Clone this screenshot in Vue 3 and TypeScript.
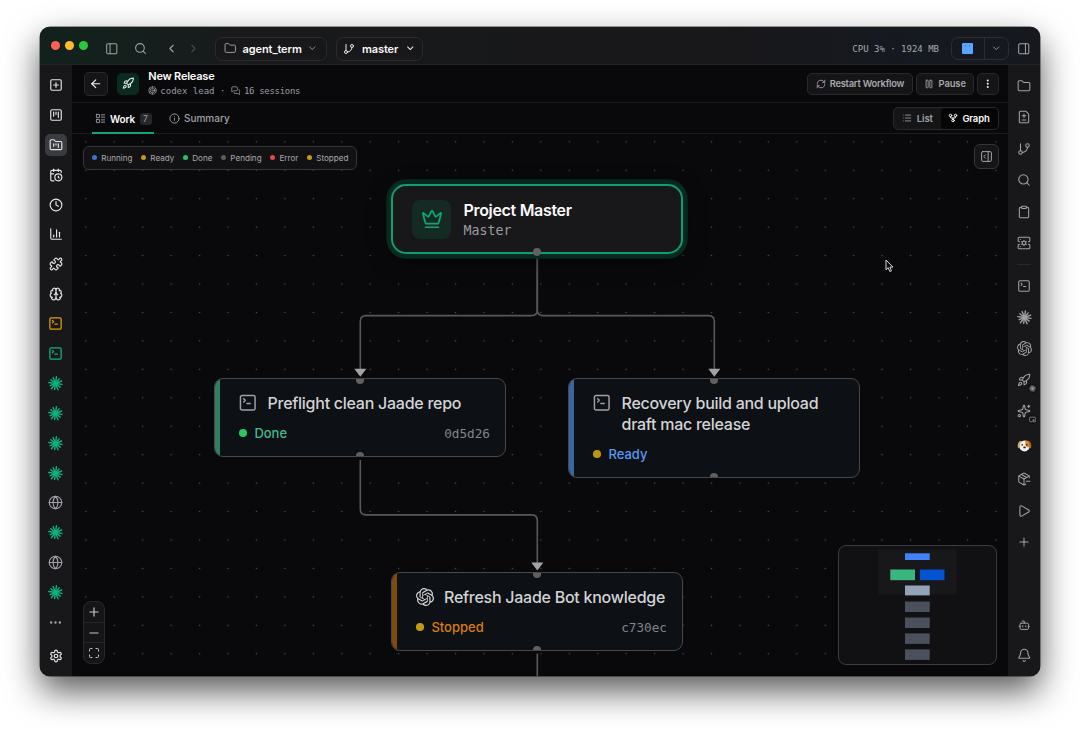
<script setup lang="ts">
import { h, type FunctionalComponent } from 'vue'

const sq = '<rect x="3" y="3" width="18" height="18" rx="2"/>'
const folderPath = '<path d="M20 20a2 2 0 0 0 2-2V8a2 2 0 0 0-2-2h-7.9a2 2 0 0 1-1.69-.9L9.6 3.9A2 2 0 0 0 7.93 3H4a2 2 0 0 0-2 2v13a2 2 0 0 0 2 2Z"/>'

function burst(): string {
  const rays: string[] = []
  const lengths = [10.5, 9.4, 10.8, 9.6, 10.6, 9.2, 10.8, 9.6, 10.2, 10.8, 9.4, 10.6]
  lengths.forEach((len, i) => {
    const a = ((i * 30 + 8) * Math.PI) / 180
    rays.push(`<path d="M12 12L${(12 + len * Math.cos(a)).toFixed(2)} ${(12 + len * Math.sin(a)).toFixed(2)}"/>`)
  })
  return rays.join('')
}

const icons: Record<string, string> = {
  panelLeft: sq + '<path d="M9 3v18"/>',
  panelRight: sq + '<path d="M15 3v18"/>',
  panelOpen: sq + '<path d="M15 3v18"/><path d="m10 15-3-3 3-3"/>',
  search: '<path d="m21 21-4.34-4.34"/><circle cx="11" cy="11" r="8"/>',
  left: '<path d="m15 18-6-6 6-6"/>',
  right: '<path d="m9 18 6-6-6-6"/>',
  down: '<path d="m6 9 6 6 6-6"/>',
  folder: folderPath,
  branch: '<path d="M6 3v12"/><circle cx="18" cy="6" r="3"/><circle cx="6" cy="18" r="3"/><path d="M18 9a9 9 0 0 1-9 9"/>',
  squarePlus: sq + '<path d="M8 12h8"/><path d="M12 8v8"/>',
  kanban: sq + '<path d="M8 7v7"/><path d="M12 7v4"/><path d="M16 7v9"/>',
  folderKanban: folderPath + '<path d="M8 10v4"/><path d="M12 10v2"/><path d="M16 10v6"/>',
  calendar: '<path d="M16 14v2.2l1.6 1"/><path d="M16 2v4"/><path d="M21 7.5V6a2 2 0 0 0-2-2H5a2 2 0 0 0-2 2v14a2 2 0 0 0 2 2h3.5"/><path d="M3 10h5"/><path d="M8 2v4"/><circle cx="16" cy="16" r="6"/>',
  clock: '<circle cx="12" cy="12" r="10"/><path d="M12 6v6l4 2"/>',
  chart: '<path d="M3 3v16a2 2 0 0 0 2 2h16"/><path d="M18 17V9"/><path d="M13 17V5"/><path d="M8 17v-3"/>',
  puzzle: '<path d="M15.39 4.39a1 1 0 0 0 1.68-.474 2.5 2.5 0 1 1 3.014 3.015 1 1 0 0 0-.474 1.68l1.683 1.682a2.414 2.414 0 0 1 0 3.414L19.61 15.39a1 1 0 0 1-1.68-.474 2.5 2.5 0 1 0-3.014 3.015 1 1 0 0 1 .474 1.68l-1.683 1.682a2.414 2.414 0 0 1-3.414 0L8.61 19.61a1 1 0 0 0-1.68.474 2.5 2.5 0 1 1-3.014-3.015 1 1 0 0 0 .474-1.68l-1.683-1.682a2.414 2.414 0 0 1 0-3.414L4.39 8.61a1 1 0 0 1 1.68.474 2.5 2.5 0 1 0 3.014-3.015 1 1 0 0 1-.474-1.68l1.683-1.682a2.414 2.414 0 0 1 3.414 0z"/>',
  brain: '<path d="M12 18V5"/><path d="M15 13a4.17 4.17 0 0 1-3-4 4.17 4.17 0 0 1-3 4"/><path d="M17.598 6.5A3 3 0 1 0 12 5a3 3 0 1 0-5.598 1.5"/><path d="M17.997 5.125a4 4 0 0 1 2.526 5.77"/><path d="M18 18a4 4 0 0 0 2-7.464"/><path d="M19.967 17.483A4 4 0 1 1 12 18a4 4 0 1 1-7.967-.517"/><path d="M6 18a4 4 0 0 1-2-7.464"/><path d="M6.003 5.125a4 4 0 0 0-2.526 5.77"/>',
  terminal: sq + '<path d="m7 11 2-2-2-2"/><path d="M11 13h4"/>',
  burst: burst(),
  globe: '<circle cx="12" cy="12" r="10"/><path d="M12 2a14.5 14.5 0 0 0 0 20 14.5 14.5 0 0 0 0-20"/><path d="M2 12h20"/>',
  dots: '<circle cx="4" cy="12" r="1"/><circle cx="12" cy="12" r="1"/><circle cx="20" cy="12" r="1"/>',
  kebab: '<circle cx="12" cy="5" r="1"/><circle cx="12" cy="12" r="1"/><circle cx="12" cy="19" r="1"/>',
  settings: '<path d="M12.22 2h-.44a2 2 0 0 0-2 2v.18a2 2 0 0 1-1 1.73l-.43.25a2 2 0 0 1-2 0l-.15-.08a2 2 0 0 0-2.73.73l-.22.38a2 2 0 0 0 .73 2.73l.15.1a2 2 0 0 1 1 1.72v.51a2 2 0 0 1-1 1.74l-.15.09a2 2 0 0 0-.73 2.73l.22.38a2 2 0 0 0 2.73.73l.15-.08a2 2 0 0 1 2 0l.43.25a2 2 0 0 1 1 1.73V20a2 2 0 0 0 2 2h.44a2 2 0 0 0 2-2v-.18a2 2 0 0 1 1-1.73l.43-.25a2 2 0 0 1 2 0l.15.08a2 2 0 0 0 2.73-.73l.22-.39a2 2 0 0 0-.73-2.73l-.15-.08a2 2 0 0 1-1-1.74v-.5a2 2 0 0 1 1-1.74l.15-.09a2 2 0 0 0 .73-2.73l-.22-.38a2 2 0 0 0-2.73-.73l-.15.08a2 2 0 0 1-2 0l-.43-.25a2 2 0 0 1-1-1.73V4a2 2 0 0 0-2-2z"/><circle cx="12" cy="12" r="3"/>',
  diff: '<path d="M15 2H6a2 2 0 0 0-2 2v16a2 2 0 0 0 2 2h12a2 2 0 0 0 2-2V7Z"/><path d="M9 10h6"/><path d="M12 13V7"/><path d="M9 17h6"/>',
  clipboard: '<rect x="8" y="2" width="8" height="4" rx="1"/><path d="M16 4h2a2 2 0 0 1 2 2v14a2 2 0 0 1-2 2H6a2 2 0 0 1-2-2V6a2 2 0 0 1 2-2h2"/>',
  server: '<circle cx="12" cy="12" r="3"/><path d="M4.5 10H4a2 2 0 0 1-2-2V4a2 2 0 0 1 2-2h16a2 2 0 0 1 2 2v4a2 2 0 0 1-2 2h-.5"/><path d="M4.5 14H4a2 2 0 0 0-2 2v4a2 2 0 0 0 2 2h16a2 2 0 0 0 2-2v-4a2 2 0 0 0-2-2h-.5"/><path d="M6 6h.01M6 18h.01M12 8V7.4M12 16v.6M8.5 14l-.6.3M15.5 14l.6.3M8.5 10l-.6-.3M15.5 10l.6-.3"/>',
  rocket: '<path d="M4.5 16.5c-1.5 1.26-2 5-2 5s3.74-.5 5-2c.71-.84.7-2.13-.09-2.91a2.18 2.18 0 0 0-2.91-.09z"/><path d="m12 15-3-3a22 22 0 0 1 2-3.95A12.88 12.88 0 0 1 22 2c0 2.72-.78 7.5-6 11a22.35 22.35 0 0 1-4 2z"/><path d="M9 12H4s.55-3.03 2-4c1.62-1.08 5 0 5 0"/><path d="M12 15v5s3.03-.55 4-2c1.08-1.62 0-5 0-5"/>',
  sparkles: '<path d="M11.017 2.814a1 1 0 0 1 1.966 0l1.051 5.558a2 2 0 0 0 1.594 1.594l5.558 1.051a1 1 0 0 1 0 1.966l-5.558 1.051a2 2 0 0 0-1.594 1.594l-1.051 5.558a1 1 0 0 1-1.966 0l-1.051-5.558a2 2 0 0 0-1.594-1.594l-5.558-1.051a1 1 0 0 1 0-1.966l5.558-1.051a2 2 0 0 0 1.594-1.594z"/><path d="M20 2v4"/><path d="M22 4h-4"/><circle cx="4" cy="20" r="2"/>',
  package: '<path d="M16 16h6"/><path d="M21 10V8a2 2 0 0 0-1-1.73l-7-4a2 2 0 0 0-2 0l-7 4A2 2 0 0 0 3 8v8a2 2 0 0 0 1 1.73l7 4a2 2 0 0 0 2 0l2-1.14"/><path d="m7.5 4.27 9 5.15"/><path d="M3.29 7 12 12l8.71-5"/><path d="M12 22V12"/>',
  play: '<path d="M5 5a2 2 0 0 1 3.008-1.728l11.997 6.998a2 2 0 0 1 .003 3.458l-12 7A2 2 0 0 1 5 19z"/>',
  plus: '<path d="M5 12h14"/><path d="M12 5v14"/>',
  minus: '<path d="M5 12h14"/>',
  bot: '<path d="M12 8V4H8"/><rect x="4" y="8" width="16" height="12" rx="2"/><path d="M2 14h2"/><path d="M20 14h2"/><path d="M15 13v2"/><path d="M9 13v2"/>',
  bell: '<path d="M10.268 21a2 2 0 0 0 3.464 0"/><path d="M3.262 15.326A1 1 0 0 0 4 17h16a1 1 0 0 0 .74-1.673C19.41 13.956 18 12.499 18 8A6 6 0 0 0 6 8c0 4.499-1.411 5.956-2.738 7.326"/>',
  crown: '<path d="M11.562 3.266a.5.5 0 0 1 .876 0L15.39 8.87a1 1 0 0 0 1.516.294L21.183 5.5a.5.5 0 0 1 .798.519l-2.834 10.246a1 1 0 0 1-.956.734H5.81a1 1 0 0 1-.957-.734L2.02 6.02a.5.5 0 0 1 .798-.519l4.276 3.664a1 1 0 0 0 1.516-.294z"/><path d="M5 21h14"/>',
  refresh: '<path d="M3 12a9 9 0 0 1 9-9 9.75 9.75 0 0 1 6.74 2.74L21 8"/><path d="M21 3v5h-5"/><path d="M21 12a9 9 0 0 1-9 9 9.75 9.75 0 0 1-6.74-2.74L3 16"/><path d="M8 16H3v5"/>',
  pause: '<rect x="14" y="3" width="5" height="18" rx="1"/><rect x="5" y="3" width="5" height="18" rx="1"/>',
  list: '<path d="M3 5h.01M3 12h.01M3 19h.01M8 5h13M8 12h13M8 19h13"/>',
  fork: '<circle cx="12" cy="18" r="3"/><circle cx="6" cy="6" r="3"/><circle cx="18" cy="6" r="3"/><path d="M18 9v2c0 .6-.4 1-1 1H7c-.6 0-1-.4-1-1V9"/><path d="M12 12v3"/>',
  layout: '<rect x="3" y="3" width="7" height="7" rx="1"/><rect x="3" y="14" width="7" height="7" rx="1"/><path d="M14 4h7M14 9h7M14 15h7M14 20h7"/>',
  info: '<circle cx="12" cy="12" r="10"/><path d="M12 16v-4"/><path d="M12 8h.01"/>',
  messages: '<path d="M16 10a2 2 0 0 1-2 2H6.828a2 2 0 0 0-1.414.586l-2.202 2.202A.71.71 0 0 1 2 14.286V4a2 2 0 0 1 2-2h10a2 2 0 0 1 2 2z"/><path d="M20 9a2 2 0 0 1 2 2v10.286a.71.71 0 0 1-1.212.502l-2.202-2.202A2 2 0 0 0 17.172 19H10a2 2 0 0 1-2-2v-1"/>',
  screen: '<path d="M22 11V7a3 3 0 0 0-3-3H5a3 3 0 0 0-3 3v10a3 3 0 0 0 3 3h5"/><rect x="13" y="14" width="9" height="6" rx="1.5"/>',
  arrowLeft: '<path d="m12 19-7-7 7-7"/><path d="M19 12H5"/>',
  maximize: '<path d="M8 3H5a2 2 0 0 0-2 2v3"/><path d="M21 8V5a2 2 0 0 0-2-2h-3"/><path d="M3 16v3a2 2 0 0 0 2 2h3"/><path d="M16 21h3a2 2 0 0 0 2-2v-3"/>',
  knot: '<path fill="currentColor" stroke="none" d="M22.2819 9.8211a5.9847 5.9847 0 0 0-.5157-4.9108 6.0462 6.0462 0 0 0-6.5098-2.9A6.0651 6.0651 0 0 0 4.9807 4.1818a5.9847 5.9847 0 0 0-3.9977 2.9 6.0462 6.0462 0 0 0 .7427 7.0966 5.98 5.98 0 0 0 .511 4.9107 6.051 6.051 0 0 0 6.5146 2.9001A5.9847 5.9847 0 0 0 13.2599 24a6.0557 6.0557 0 0 0 5.7718-4.2058 5.9894 5.9894 0 0 0 3.9977-2.9001 6.0557 6.0557 0 0 0-.7475-7.0729zm-9.022 12.6081a4.4755 4.4755 0 0 1-2.8764-1.0408l.1419-.0804 4.7783-2.7582a.7948.7948 0 0 0 .3927-.6813v-6.7369l2.02 1.1686a.071.071 0 0 1 .038.052v5.5826a4.504 4.504 0 0 1-4.4945 4.4944zm-9.6607-4.1254a4.4708 4.4708 0 0 1-.5346-3.0137l.142.0852 4.783 2.7582a.7712.7712 0 0 0 .7806 0l5.8428-3.3685v2.3324a.0804.0804 0 0 1-.0332.0615L9.74 19.9502a4.4992 4.4992 0 0 1-6.1408-1.6464zM2.3408 7.8956a4.485 4.485 0 0 1 2.3655-1.9728V11.6a.7664.7664 0 0 0 .3879.6765l5.8144 3.3543-2.0201 1.1685a.0757.0757 0 0 1-.071 0l-4.8303-2.7865A4.504 4.504 0 0 1 2.3408 7.872zm16.5963 3.8558L13.1038 8.364 15.1192 7.2a.0757.0757 0 0 1 .071 0l4.8303 2.7913a4.4944 4.4944 0 0 1-.6765 8.1042v-5.6772a.79.79 0 0 0-.407-.667zm2.0107-3.0231l-.142-.0852-4.7735-2.7818a.7759.7759 0 0 0-.7854 0L9.409 9.2297V6.8974a.0662.0662 0 0 1 .0284-.0615l4.8303-2.7866a4.4992 4.4992 0 0 1 6.6802 4.66zM8.3065 12.863l-2.02-1.1638a.0804.0804 0 0 1-.038-.0567V6.0742a4.4992 4.4992 0 0 1 7.3757-3.4537l-.142.0805L8.704 5.459a.7948.7948 0 0 0-.3927.6813zm1.0976-2.3654l2.602-1.4998 2.6069 1.4998v2.9994l-2.5974 1.4997-2.6067-1.4997Z"/>',
  codex: '<circle cx="12" cy="12" r="10"/><circle cx="12" cy="12" r="6"/><circle cx="12" cy="12" r="2"/><path d="M12 2v4M12 18v4M3.3 7l3.5 2M17.2 15l3.5 2M20.7 7l-3.5 2M6.8 15l-3.5 2"/>',
  dog: '<g stroke="none"><ellipse cx="12" cy="12.600" rx="8.600" ry="8.800" fill="#f4f1ea"/><path fill="#d9902f" d="M13.500 4c4-.6 7 2 7.200 7 0 3.500-2.500 4.500-5 3.500-2.700-1.600-3-6.500-2.200-10.500z"/><path fill="#cfa878" d="M5.500 4.500C2.500 5.500.6 10 1.200 14.500c.8 2.800 2.800 2 3.200-.8.3-3.700.8-6.400 2.800-8.700z"/><path fill="#b4641c" d="M18.500 4.500c3 1 5 5.500 4.300 10-.8 2.800-2.800 2-3.200-.8-.3-3.700-.8-6.400-2.800-8.700z"/><circle cx="8.300" cy="11" r="1.300" fill="#222"/><circle cx="15.700" cy="11" r="1.300" fill="#222"/><ellipse cx="12" cy="15" rx="2" ry="1.500" fill="#222"/></g>',
}

const Icon: FunctionalComponent<{ name: string; size: number; stroke?: number }> = (props) =>
  h('svg', {
    width: props.size,
    height: props.size,
    viewBox: '0 0 24 24',
    fill: 'none',
    stroke: 'currentColor',
    'stroke-width': props.stroke ?? 2,
    'stroke-linecap': 'round',
    'stroke-linejoin': 'round',
    innerHTML: icons[props.name],
  })
Icon.props = ['name', 'size', 'stroke']

interface RailItem { icon: string; tone?: string; active?: boolean; size?: number; stroke?: number; badge?: string }

const agent: RailItem = { icon: 'burst', tone: 'green', size: 15, stroke: 2.3 }
const web: RailItem = { icon: 'globe', tone: 'muted', size: 15, stroke: 1.8 }

const leftRail: RailItem[] = [
  { icon: 'squarePlus' },
  { icon: 'kanban' },
  { icon: 'folderKanban', active: true },
  { icon: 'calendar' },
  { icon: 'clock' },
  { icon: 'chart' },
  { icon: 'puzzle' },
  { icon: 'brain' },
  { icon: 'terminal', tone: 'amber', size: 15 },
  { icon: 'terminal', tone: 'green', size: 15 },
  agent, agent, agent, agent, web, agent, web, agent,
  { icon: 'dots', tone: 'muted', size: 13, stroke: 2.4 },
]

const rightTop: RailItem[] = [
  { icon: 'folder' }, { icon: 'diff' }, { icon: 'branch' }, { icon: 'search' }, { icon: 'clipboard' }, { icon: 'server' },
]
const rightAgents: RailItem[] = [
  { icon: 'terminal' }, { icon: 'burst', size: 15, stroke: 2.2 }, { icon: 'knot', size: 15 },
  { icon: 'rocket', badge: 'burst' }, { icon: 'sparkles', badge: 'screen' },
  { icon: 'dog', size: 15 }, { icon: 'package' }, { icon: 'play' }, { icon: 'plus' },
]

const legend = [
  { label: 'Running', color: '#3b73cf' },
  { label: 'Ready', color: '#c49a16' },
  { label: 'Done', color: '#2bc169' },
  { label: 'Pending', color: '#5c5c61' },
  { label: 'Error', color: '#e2484b' },
  { label: 'Stopped', color: '#c49a16' },
]

const nodes = [
  { x: 142, y: 244, h: 79, icon: 'terminal', title: ['Preflight clean Jaade repo'], status: 'Done', tone: 'done', hash: '0d5d26' },
  { x: 496, y: 244, h: 100, icon: 'terminal', title: ['Recovery build and upload', 'draft mac release'], status: 'Ready', tone: 'ready', hash: '' },
  { x: 319, y: 438, h: 79, icon: 'knot', title: ['Refresh Jaade Bot knowledge'], status: 'Stopped', tone: 'stopped', hash: 'c730ec' },
]

const miniNodes = [
  { x: 905, y: 553.3, h: 6.7, color: '#3f83f6' },
  { x: 890.3, y: 569.5, h: 10.7, color: '#3cb681' },
  { x: 919.8, y: 569.5, h: 10.7, color: '#0353d2' },
  { x: 905, y: 585.5, h: 9.9, color: '#94a3b8' },
  { x: 905, y: 601.5, h: 10.5, color: '#4a505c' },
  { x: 905, y: 617.5, h: 10.5, color: '#4a505c' },
  { x: 905, y: 633.4, h: 10.5, color: '#4a505c' },
  { x: 905, y: 649.4, h: 10.5, color: '#4a505c' },
]
</script>

<template>
  <div class="desktop">
    <div class="window">
      <header class="titlebar">
        <div class="lights"><i class="red" /><i class="yellow" /><i class="lime" /></div>
        <Icon class="tb-panel" name="panelLeft" :size="13.5" :stroke="1.8" />
        <Icon class="tb-search" name="search" :size="13" :stroke="2" />
        <Icon class="tb-back" name="left" :size="13" />
        <Icon class="tb-fwd" name="right" :size="13" />
        <button class="picker project">
          <Icon name="folder" :size="12.5" :stroke="1.8" /><span>agent_term</span><Icon name="down" :size="10.5" />
        </button>
        <button class="picker git">
          <Icon name="branch" :size="12" /><span>master</span><Icon name="down" :size="10.5" :stroke="2.4" />
        </button>
        <span class="usage">CPU 3% · 1924 MB</span>
        <div class="split">
          <span class="split-main"><i class="bot-face"><b /><b /></i></span>
          <span class="split-more"><Icon name="down" :size="10.5" /></span>
        </div>
        <Icon class="tb-right" name="panelRight" :size="13.5" :stroke="1.8" />
      </header>

      <div class="body">
        <nav class="rail left">
          <span v-for="(item, i) in leftRail" :key="i" class="cell" :class="[item.tone, { active: item.active }]">
            <i class="hit"><Icon :name="item.icon" :size="item.size ?? 14" :stroke="item.stroke ?? 2" /></i>
          </span>
          <span class="cell last"><Icon name="settings" :size="14" :stroke="2.1" /></span>
        </nav>

        <main class="main">
          <section class="head">
            <span class="btn back"><Icon name="arrowLeft" :size="13.5" /></span>
            <span class="logo"><Icon name="rocket" :size="12.5" /></span>
            <div class="title">
              <h1>New Release</h1>
              <p>
                <Icon name="codex" :size="9" :stroke="1.8" /><span class="lead">codex lead</span><span class="sep">·</span>
                <Icon name="messages" :size="9.5" /><span class="count">16 sessions</span>
              </p>
            </div>
            <div class="actions">
              <span class="btn restart"><Icon name="refresh" :size="10" /><span>Restart Workflow</span></span>
              <span class="btn pause"><Icon name="pause" :size="10" /><span>Pause</span></span>
              <span class="btn more"><Icon name="kebab" :size="11.5" :stroke="2.2" /></span>
            </div>
          </section>

          <section class="tabs">
            <span class="tab work"><Icon name="layout" :size="11" /><b>Work</b><i>7</i></span>
            <span class="tab summary"><Icon name="info" :size="11" /><b>Summary</b></span>
            <div class="toggle">
              <span><Icon name="list" :size="10" />List</span>
              <span class="on"><Icon name="fork" :size="10" :stroke="2.4" />Graph</span>
            </div>
          </section>

          <section class="canvas">
            <svg class="layer" width="936" height="542" viewBox="72 134 936 542">
              <defs>
                <pattern id="grid" x="71.6" y="127.6" width="28.44" height="28.44" patternUnits="userSpaceOnUse">
                  <circle cx="14.22" cy="14.22" r=".8" fill="#4c4c51" />
                </pattern>
              </defs>
              <rect x="72" y="134" width="936" height="542" fill="url(#grid)" />
              <g fill="none" stroke="#58585a" stroke-width="1.6">
                <path d="M537.3 254V310Q537.3 315.6 531.7 315.6H366Q360.3 315.6 360.3 321.3V370" />
                <path d="M537.3 254V310Q537.3 315.6 542.9 315.6H708.6Q714.3 315.6 714.3 321.3V370" />
                <path d="M360.3 460V509.2Q360.3 514.9 366 514.9H531.6Q537.3 514.9 537.3 520.6V564" />
                <path d="M537.3 653.5V676" />
              </g>
              <g fill="#a3a3a5">
                <path d="M354.3 368.8h12l-6 8z" />
                <path d="M708.3 368.8h12l-6 8z" />
                <path d="M531.3 562.6h12l-6 8z" />
              </g>
            </svg>

            <article class="master">
              <span class="crown"><Icon name="crown" :size="22" :stroke="1.9" /></span>
              <div><h2>Project Master</h2><p>Master</p></div>
              <i class="port" />
            </article>

            <article
              v-for="n in nodes" :key="n.status" class="node" :class="n.tone"
              :style="{ left: n.x + 'px', top: n.y + 'px', height: n.h + 'px' }"
            >
              <i class="port in" /><i class="port out" />
              <div class="node-title">
                <Icon :name="n.icon" :size="n.icon === 'knot' ? 18 : 19.5" :stroke="1.8" />
                <h3><span v-for="line in n.title" :key="line">{{ line }}</span></h3>
              </div>
              <div class="node-foot"><i class="dot" /><b>{{ n.status }}</b><code>{{ n.hash }}</code></div>
            </article>

            <div class="legend">
              <span v-for="l in legend" :key="l.label"><i :style="{ background: l.color }" />{{ l.label }}</span>
            </div>
            <span class="btn collapse"><Icon name="panelOpen" :size="13" :stroke="1.8" /></span>
            <div class="zoom">
              <span><Icon name="plus" :size="14" /></span>
              <span><Icon name="minus" :size="14" /></span>
              <span><Icon name="maximize" :size="12" /></span>
            </div>
            <div class="minimap">
              <svg width="157" height="118" viewBox="839 546 157 118">
                <rect x="878.5" y="549.5" width="78" height="45" fill="#18181a" />
                <rect v-for="(m, i) in miniNodes" :key="i" :x="m.x" :y="m.y" width="24.7" :height="m.h" :fill="m.color" />
              </svg>
            </div>
            <svg class="cursor" width="9" height="14" viewBox="0 0 9 14">
              <path d="M1 1v9.700l2.200-2 1.600 3.800 1.700-.7-1.600-3.700h3z" fill="#0a0a0b" stroke="#d8d8da" stroke-width="1" stroke-linejoin="round" />
            </svg>
          </section>
        </main>

        <nav class="rail right">
          <span v-for="item in rightTop" :key="item.icon" class="cell"><Icon :name="item.icon" :size="14" :stroke="1.8" /></span>
          <hr>
          <span v-for="item in rightAgents" :key="item.icon" class="cell" :class="item.icon">
            <Icon :name="item.icon" :size="item.size ?? 14" :stroke="item.stroke ?? 1.8" />
            <i v-if="item.badge" class="badge"><Icon :name="item.badge" :size="7" :stroke="2.4" /></i>
          </span>
          <span class="cell end"><Icon name="bot" :size="12.5" :stroke="1.9" /></span>
          <span class="cell end-2"><Icon name="bell" :size="14.5" :stroke="1.8" /></span>
        </nav>
      </div>
    </div>
  </div>
</template>

<style>
body { background: #fff; overflow: hidden; }
</style>

<style scoped>
* { box-sizing: border-box; }
svg { display: block; flex: none; }
h1, h2, h3, p { margin: 0; }
i, b { font-style: normal; }
.desktop { width: 1080px; height: 729px; padding: 27px 40px 0; background: #fff; font-family: Inter, "Liberation Sans", sans-serif; }
.window { width: 1000px; height: 649px; border-radius: 10px; overflow: hidden; background: #09090b; color: #fafafa; display: flex; flex-direction: column; box-shadow: 0 0 0 .5px rgba(0,0,0,.7), 0 15px 34px rgba(0,0,0,.66); }

.titlebar { height: 38px; display: flex; align-items: center; padding: 6px 9.5px 0 10.5px; background: linear-gradient(90deg, #12211c 0, #15201d 8%, #18191b 21%, #18181b 70%, #151920 88%, #16181e 100%); border-bottom: 1px solid #222427; color: #a1a1aa; flex: none; }
.lights { display: flex; gap: 5.3px; margin-top: -6px; }
.lights i { width: 9px; height: 9px; border-radius: 50%; }
.red { background: #fe5f57; }
.yellow { background: #febb2e; }
.lime { background: #28c840; }
.tb-panel { margin-left: 17.3px; }
.tb-search { margin-left: 15px; }
.tb-back { margin-left: 18.5px; }
.tb-fwd { margin-left: 9px; color: #4b4b51; }
.picker { height: 24px; display: flex; align-items: center; border: 1px solid #2b2b2f; border-radius: 7px; background: #18181a; color: #a1a1aa; padding: 0 8px; font: 600 11px Inter, sans-serif; }
.picker span { color: #fafafa; letter-spacing: -.1px; }
.project { width: 111.5px; margin-left: 15px; justify-content: space-between; padding: 0 8px 0 8px; }
.git { width: 87px; margin-left: 9.5px; justify-content: space-between; padding: 0 7px 0 6px; color: #e8e8ea; }
.usage { margin-left: auto; font: 9px "DejaVu Sans Mono", monospace; white-space: pre; color: #a8a8ae; }
.split { width: 58px; height: 23px; margin-left: 12px; display: flex; border: 1px solid #2b2d31; border-radius: 7px; }
.split-main { width: 32.5px; border-right: 1px solid #2b2d31; display: grid; place-items: center; }
.split-more { flex: 1; display: grid; place-items: center; }
.bot-face { width: 11px; height: 11px; background: #58a6ff; border-radius: 1px; display: flex; justify-content: center; gap: 3px; padding-top: 2px; }
.bot-face b { width: 1px; height: 1px; background: #2c6fc0; }
.tb-right { margin-left: 8px; }

.body { flex: 1; display: flex; min-height: 0; }
.rail { width: 32px; flex: none; background: #18181a; display: flex; flex-direction: column; align-items: center; color: #a3a3a8; }
.cell { display: grid; place-items: center; position: relative; flex: none; width: 32px; }
.left { padding: 5.4px 1px 5px 0; color: #e4e4e7; }
.left .cell { height: 29.83px; }
.left .last { margin-top: auto; }
.hit { width: 22px; height: 22px; border-radius: 5px; display: grid; place-items: center; }
.active .hit { background: #3a3a41; }
.amber { color: #e0a008; }
.green { color: #10b27b; }
.muted { color: #a1a1aa; }
.right { padding: 5.3px 0 6px; }
.right .cell { height: 31.4px; }
.right .dog { height: 36.5px; }
.right hr { width: 14px; height: 1px; border: 0; margin: 5.6px 0 5px; background: #29292c; flex: none; }
.right .end { margin-top: auto; height: 30px; }
.right .end-2 { height: 30px; }
.badge { position: absolute; right: 3px; bottom: 3px; width: 9px; height: 9px; border-radius: 50%; background: #111113; display: grid; place-items: center; }

.main { width: 936px; flex: none; display: flex; flex-direction: column; background: #09090b; }
.btn { display: flex; align-items: center; justify-content: center; border: 1px solid #29292c; border-radius: 5px; background: #151517; color: #a8a8ae; font-size: 9.4px; font-weight: 600; letter-spacing: -.1px; }
.head { height: 38px; display: flex; align-items: center; padding: 0 9px 0 12px; border-bottom: 1px solid #1c1c1f; flex: none; }
.back { width: 24px; height: 24px; color: #f4f4f5; }
.logo { width: 22px; height: 22px; margin-left: 9px; border-radius: 5px; background: #0a2b20; display: grid; place-items: center; color: #d9ede5; }
.title { margin-left: 9.3px; }
.title h1 { font-size: 11px; line-height: 14px; font-weight: 600; letter-spacing: -.22px; color: #fafafa; margin-top: -1px; }
.title p { display: flex; align-items: center; height: 14px; margin-top: 1px; font: 9px "DejaVu Sans Mono", monospace; color: #9c9ca2; white-space: pre; }
.lead { margin-left: 3px; }
.sep { width: 5.4px; margin: 0 5.5px 0 5.5px; }
.count { margin-left: 3.5px; letter-spacing: -.3px; }
.actions { margin-left: auto; display: flex; gap: 3.3px; }
.actions .btn { height: 22px; }
.restart { width: 106px; gap: 4px; letter-spacing: -.25px; }
.pause { width: 57.5px; gap: 4.5px; }
.more { width: 22px; color: #f4f4f5; }
.tabs { height: 31px; display: flex; align-items: center; padding: 0 9px 0 20px; border-bottom: 1px solid #1c1c1f; flex: none; }
.tab { height: 31px; display: flex; align-items: center; font-size: 10px; color: #a1a1aa; }
.tab b { font-weight: 500; }
.work { width: 62px; padding: 1px 0 0 2.5px; box-shadow: inset 0 -2px #10a574; }
.work b { margin-left: 4.5px; font-weight: 600; letter-spacing: -.15px; color: #fafafa; }
.work i { margin-left: 4.5px; width: 12px; height: 12px; border-radius: 3px; background: #27272a; font-size: 8.5px; line-height: 12px; text-align: center; }
.summary { margin-left: 14.5px; }
.summary b { margin-left: 4.5px; }
.toggle { margin-left: auto; width: 106px; height: 23px; display: flex; border: 1px solid #29292c; border-radius: 5px; background: #151517; font-size: 9.5px; font-weight: 600; letter-spacing: -.15px; color: #a1a1aa; overflow: hidden; }
.toggle span { display: flex; align-items: center; justify-content: center; gap: 4.5px; width: 47px; }
.toggle .on { width: 57px; background: #050506; color: #fafafa; border-radius: 4px; gap: 4px; padding-right: 1px; }

.canvas { flex: 1; position: relative; overflow: hidden; background: #09090b; }
.layer { position: absolute; left: 0; top: 0; }
.master { position: absolute; left: 319px; top: 50px; width: 292px; height: 70px; border: 2.5px solid #109e6e; border-radius: 15px; background: #18181a; box-shadow: 0 0 0 4.7px #07291d, 0 6px 24px rgba(0,0,0,.4); display: flex; align-items: center; padding-left: 19px; }
.crown { width: 39px; height: 39px; border-radius: 8px; background: #162a24; color: #10a574; display: grid; place-items: center; }
.master div { margin-left: 12.5px; padding-top: 2px; }
.master h2 { font-size: 16px; line-height: 20px; font-weight: 600; letter-spacing: -.32px; }
.master p { font: 13.3px/20px "DejaVu Sans Mono", monospace; color: #9c9ca2; margin-top: 1px; }
.port { position: absolute; width: 8px; height: 8px; border-radius: 50%; background: #606063; }
.master .port { left: 140.3px; bottom: -4px; }
.node { position: absolute; width: 292px; border: 1px solid #46484b; border-radius: 9px; background: #0d1014; overflow: hidden; padding: 13.5px 15px 13px 24px; display: flex; flex-direction: column; }
.node::before { content: ""; position: absolute; left: 0; top: 0; bottom: 0; width: 4.5px; background: var(--bar); }
.done { --bar: #337e60; --ink: #43bb8c; --dot: #2bc45f; }
.ready { --bar: #3b669f; --ink: #5898f2; --dot: #be9412; }
.stopped { --bar: #7f4910; --ink: #d97d0c; --dot: #c49a16; }
.node .port { left: 141.3px; }
.in { top: -3.5px; }
.out { bottom: -3.5px; }
.node-title { display: flex; align-items: flex-start; color: #a1a1a6; }
.node-title svg { margin-left: -1px; margin-top: .5px; }
.node-title h3 { margin-left: 10px; font-size: 16px; line-height: 21px; font-weight: 500; letter-spacing: -.26px; color: #d2d3d5; white-space: nowrap; }
.stopped .node-title { color: #d2d3d5; }
.stopped .node-title svg { margin: 1px 0 0 0; }
.node-title span { display: block; }
.node-foot { margin-top: auto; display: flex; align-items: center; height: 20px; font-size: 13px; }
.dot { width: 7.6px; height: 7.6px; border-radius: 50%; background: var(--dot); }
.node-foot b { margin-left: 7.8px; font-weight: 500; color: var(--ink); }
.node-foot code { margin-left: auto; font: 12.7px "DejaVu Sans Mono", monospace; color: #83858a; }

.legend { position: absolute; left: 11px; top: 12px; width: 274px; height: 23.5px; border: 1px solid #353539; border-radius: 6px; background: #121214; display: flex; align-items: center; justify-content: space-between; padding: 0 7.5px; font-size: 8.1px; color: #a8a8ae; }
.legend span { display: flex; align-items: center; gap: 4.5px; }
.legend i { width: 5.2px; height: 5.2px; border-radius: 50%; }
.collapse { position: absolute; left: 902.3px; top: 10px; width: 25px; height: 25px; border-radius: 6px; border-color: #353539; }
.zoom { position: absolute; left: 11px; top: 467px; width: 22px; height: 63px; border: 1px solid #29292c; border-radius: 8px; background: #151517; color: #c8c8cc; display: flex; flex-direction: column; }
.zoom span { flex: 1; display: grid; place-items: center; }
.zoom span + span { border-top: 1px solid #252528; }
.minimap { position: absolute; left: 766px; top: 411px; width: 159px; height: 120px; border: 1px solid #3c3c40; border-radius: 8px; background: #111113; overflow: hidden; }
.cursor { position: absolute; left: 813px; top: 125px; }
</style>
